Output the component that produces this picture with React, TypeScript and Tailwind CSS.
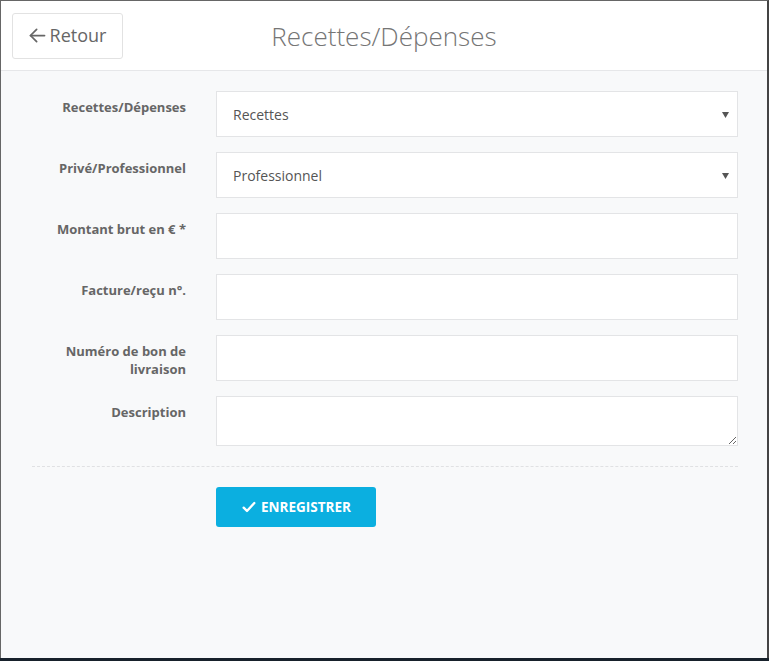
import React from "react";

const font = { fontFamily: '"Open Sans", "Noto Sans", Arial, sans-serif' };

function Arrow() {
  return (
    <svg width="7" height="6" viewBox="0 0 7 6" className="absolute right-[8px] top-[20px]">
      <path d="M0 0 H7 L3.5 6 Z" fill="#555" />
    </svg>
  );
}

function Row({ label, children }: { label: React.ReactNode; children: React.ReactNode }) {
  return (
    <div className="flex">
      <div className="w-[154px] shrink-0 pt-[7px] text-right text-[13px] font-bold leading-[18px] text-[#666]">
        {label}
      </div>
      <div className="ml-[30px] flex-1">{children}</div>
    </div>
  );
}

function Select({ value }: { value: string }) {
  return (
    <div className="relative flex h-[46px] items-center border border-[#e3e4e6] bg-white pl-[16px] text-[14px] text-[#555]">
      {value}
      <Arrow />
    </div>
  );
}

function Input() {
  return <input className="block h-[46px] w-full border border-[#e3e4e6] bg-white px-4 text-[14px] outline-none" />;
}

export default function App() {
  return (
    <div style={font} className="flex h-[661px] w-[769px] flex-col overflow-hidden bg-[#17212b]">
      <div className="mb-[3px] flex flex-1 flex-col border-l border-r-2 border-t border-l-[#666] border-r-[#444] border-t-[#666] bg-[#f8f9fa]">
        <div className="grid h-[70px] grid-cols-[1fr_auto_1fr] items-center border-b border-[#e6e7e9] bg-white">
          <div className="pl-[11px]">
            <button className="flex h-[46px] w-[111px] items-center justify-center gap-[2px] rounded-[3px] border border-[#e2e2e2] bg-white pr-[2px] text-[18px] text-[#666]">
              <svg width="21" height="21" viewBox="0 0 24 24" fill="none" stroke="#666" strokeWidth="2" strokeLinecap="round" strokeLinejoin="round">
                <path d="M20 12H4" />
                <path d="M11 19l-7-7 7-7" />
              </svg>
              Retour
            </button>
          </div>
          <div className="pt-[1px] text-[26px] font-light text-[#757575]">Recettes/Dépenses</div>
          <div />
        </div>
        <div className="flex flex-col pl-[31px] pr-[29px] pt-[20px]">
          <div className="flex flex-col gap-[15px]">
            <Row label="Recettes/Dépenses">
              <Select value="Recettes" />
            </Row>
            <Row label="Privé/Professionnel">
              <Select value="Professionnel" />
            </Row>
            <Row label="Montant brut en € *">
              <Input />
            </Row>
            <Row label="Facture/reçu n°.">
              <Input />
            </Row>
            <Row label={<>Numéro de bon de<br />livraison</>}>
              <Input />
            </Row>
            <Row label="Description">
              <textarea className="block h-[50px] w-full border border-[#e3e4e6] bg-white px-4 py-2 text-[14px] outline-none" />
            </Row>
          </div>
          <div className="mt-[20px] border-t border-dashed border-[#e0e1e3]" />
          <div className="ml-[184px] mt-[20px]">
            <button className="flex h-[40px] w-[160px] items-center justify-center gap-[4px] rounded-[3px] bg-[#0bafe0] text-[13.5px] font-bold text-white">
              <svg width="16" height="16" viewBox="0 0 24 24" fill="none" stroke="white" strokeWidth="3.5" strokeLinecap="round" strokeLinejoin="round">
                <path d="M4 13l5 5L20 6" />
              </svg>
              ENREGISTRER
            </button>
          </div>
        </div>
      </div>
    </div>
  );
}
